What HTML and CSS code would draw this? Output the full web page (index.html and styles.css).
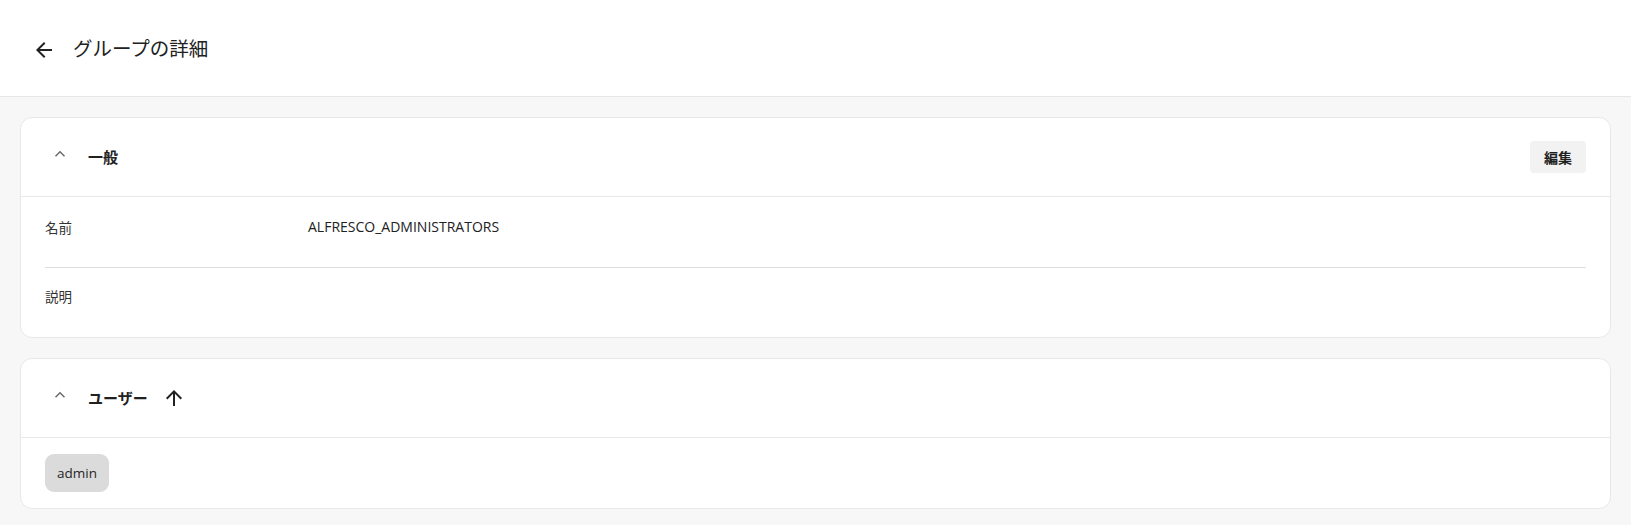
FILE: index.html
```html
<!DOCTYPE html>
<html lang="ja">
<head>
<meta charset="utf-8">
<title>グループの詳細</title>
<link rel="stylesheet" href="styles.css">
</head>
<body>
<header class="topbar">
  <button class="icon-btn back" aria-label="戻る">
    <svg viewBox="0 0 24 24" width="24" height="24"><path d="M20 11H7.83l5.59-5.59L12 4l-8 8 8 8 1.41-1.41L7.83 13H20v-2z" fill="#212121"/></svg>
  </button>
  <h1 class="page-title">グループの詳細</h1>
</header>
<main class="content">
  <section class="card">
    <div class="card-header">
      <button class="icon-btn toggle" aria-label="折りたたむ">
        <svg viewBox="0 0 20 20" width="20" height="20"><path d="M5.5 13.2 10 8.7l4.5 4.5" fill="none" stroke="#6b6b6b" stroke-width="1.5"/></svg>
      </button>
      <h2 class="card-title">一般</h2>
      <span class="spacer"></span>
      <button class="edit-btn">編集</button>
    </div>
    <div class="card-body">
      <div class="row">
        <span class="label">名前</span>
        <span class="value">ALFRESCO_ADMINISTRATORS</span>
      </div>
      <div class="row last">
        <span class="label">説明</span>
        <span class="value"></span>
      </div>
    </div>
  </section>
  <section class="card">
    <div class="card-header">
      <button class="icon-btn toggle" aria-label="折りたたむ">
        <svg viewBox="0 0 20 20" width="20" height="20"><path d="M5.5 13.2 10 8.7l4.5 4.5" fill="none" stroke="#6b6b6b" stroke-width="1.5"/></svg>
      </button>
      <h2 class="card-title">ユーザー</h2>
      <button class="icon-btn sort" aria-label="並べ替え">
        <svg viewBox="0 0 24 24" width="24" height="24"><path d="M4 12l1.41 1.41L11 7.83V20h2V7.83l5.58 5.59L20 12l-8-8-8 8z" fill="#212121"/></svg>
      </button>
    </div>
    <div class="chips">
      <span class="chip">admin</span>
    </div>
  </section>
</main>
</body>
</html>
```
FILE: styles.css
```css
* { box-sizing: border-box; }
html, body { margin: 0; padding: 0; }
body {
  background: #f7f7f7;
  font-family: "Open Sans", "Noto Sans CJK JP", sans-serif;
  color: #212121;
  font-size: 14px;
}
button {
  font-family: inherit;
  border: none;
  background: none;
  padding: 0;
  margin: 0;
  cursor: pointer;
}
.topbar {
  height: 97px;
  background: #fff;
  border-bottom: 1px solid #e6e6e6;
  display: flex;
  align-items: center;
  padding: 0 24px;
}
.icon-btn {
  display: flex;
  align-items: center;
  justify-content: center;
}
.back {
  width: 40px;
  height: 40px;
  margin-top: 4px;
  margin-right: 9px;
}
.page-title {
  margin: 0;
  font-family: "Noto Sans CJK JP", sans-serif;
  font-weight: 400;
  font-size: 19.5px;
  color: #212121;
  line-height: 28px;
}
.content {
  padding: 20px 20px;
  display: flex;
  flex-direction: column;
  gap: 20px;
}
.card {
  background: #fff;
  border: 1px solid #e8e8e8;
  border-radius: 12px;
}
.card-header {
  height: 79px;
  border-bottom: 1px solid #e8e8e8;
  display: flex;
  align-items: center;
  padding: 0 24px 0 23px;
}
.toggle {
  width: 32px;
  height: 32px;
  margin-top: -9px;
  margin-right: 12px;
}
.card-title {
  margin: 0;
  font-family: "Noto Sans CJK JP", sans-serif;
  font-weight: 700;
  font-size: 15px;
  line-height: 20px;
  color: #212121;
}
.spacer { flex: 1; }
.sort {
  width: 24px;
  height: 24px;
  margin-left: 14px;
}
.edit-btn {
  width: 56px;
  height: 32px;
  background: #f2f2f2;
  border-radius: 4px;
  font-family: "Noto Sans CJK JP", sans-serif;
  font-weight: 700;
  font-size: 14px;
  color: #212121;
}
.card-body {
  padding: 0 24px;
}
.row {
  display: grid;
  grid-template-columns: 263px 1fr;
  padding: 20px 0 30px;
  line-height: 20px;
  border-bottom: 1px solid #dedede;
}
.row.last {
  border-bottom: none;
  padding: 18px 0 31px;
}
.label {
  font-family: "Noto Sans CJK JP", sans-serif;
  font-size: 13.5px;
  color: #333;
}
.value {
  font-size: 14px;
  color: #212121;
}
.chips {
  padding: 16px 24px 16px;
  display: flex;
  gap: 8px;
}
.chip {
  height: 38px;
  padding: 0 12px;
  display: inline-flex;
  align-items: center;
  background: #dbdbdb;
  border-radius: 9px;
  font-size: 13.5px;
  color: #262626;
}
```
